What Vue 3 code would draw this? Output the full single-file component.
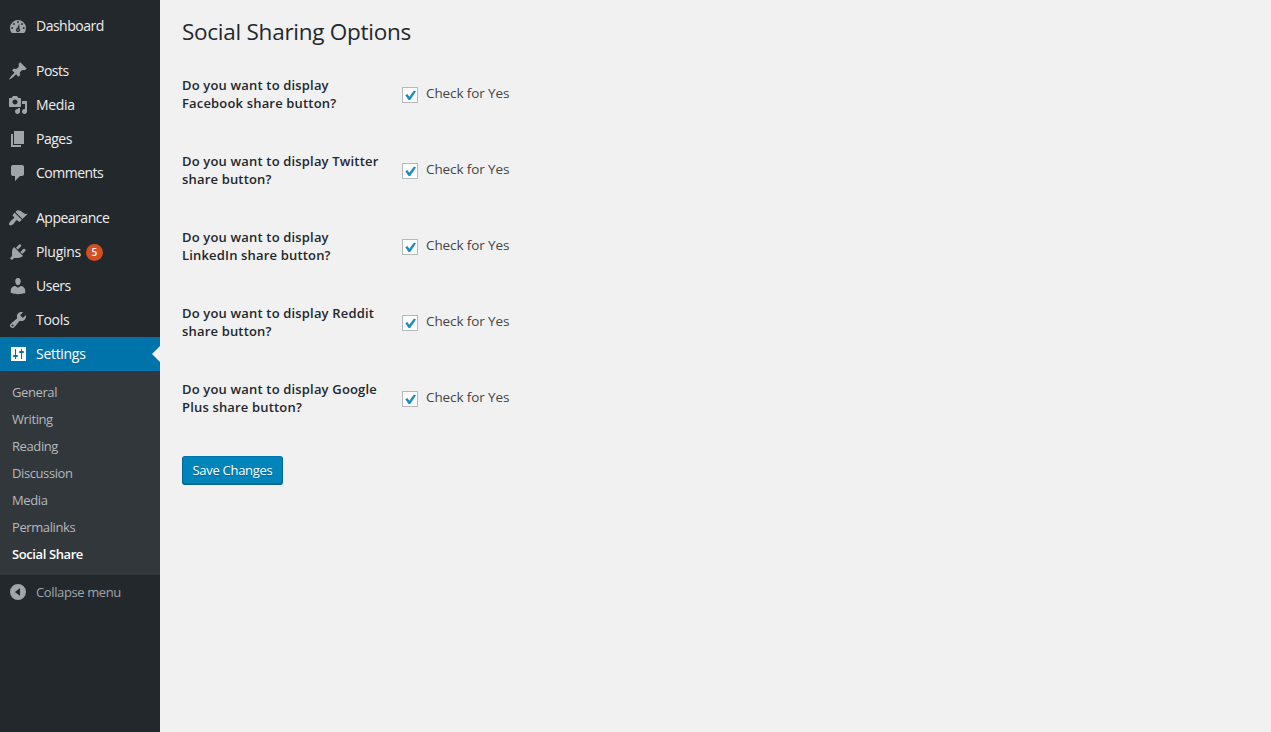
<script setup>
import { ref } from 'vue'

const icons = {
  dashboard: 'M3.76 17h12.48A8 8 0 1 0 3.76 17zM9.1 6a.9.9 0 1 0 1.8 0a.9.9 0 1 0-1.8 0zM5.1 8a.9.9 0 1 0 1.8 0a.9.9 0 1 0-1.8 0zM13.1 8a.9.9 0 1 0 1.8 0a.9.9 0 1 0-1.8 0zM3.3 12a.9.9 0 1 0 1.8 0a.9.9 0 1 0-1.8 0zM14.9 12a.9.9 0 1 0 1.8 0a.9.9 0 1 0-1.8 0zM11.3 7.5L11.4 12.5A2 2 0 1 1 9.3 12.1zM9.2 14a.8.8 0 1 0 1.6 0a.8.8 0 1 0-1.6 0z',
  posts: 'M10.44 3.02l1.82-1.82 6.36 6.35-1.83 1.82c-1.05-.68-2.48-.57-3.41.36l-.75.75c-.92.93-1.04 2.35-.35 3.41l-1.83 1.82-2.41-2.41-2.8 2.79c-.42.42-3.38 2.71-3.8 2.29s1.86-3.39 2.28-3.81l2.79-2.79L4.1 9.36l1.83-1.82c1.05.69 2.48.57 3.4-.36l.75-.75c.93-.92 1.05-2.35.36-3.41z',
  media: 'M13 11V4c0-.55-.45-1-1-1h-1.67L9 1H5L3.67 3H2c-.55 0-1 .45-1 1v7c0 .55.45 1 1 1h10c.55 0 1-.45 1-1zM7 4.5c1.38 0 2.5 1.12 2.5 2.5S8.38 9.5 7 9.5 4.5 8.38 4.5 7 5.62 4.5 7 4.5zM14 6h5v10.5c0 1.38-1.12 2.5-2.5 2.5S14 17.88 14 16.5s1.12-2.5 2.5-2.5c.17 0 .34.02.5.05V9h-3V6zm-4 8.05V13h2v3.5c0 1.38-1.12 2.5-2.5 2.5S7 17.88 7 16.5 8.12 14 9.5 14c.17 0 .34.02.5.05z',
  pages: 'M6 15V2h10v13H6zm-1 1h8v2H3V5h2v11z',
  comments: 'M5 2h9c1.1 0 2 .9 2 2v7c0 1.1-.9 2-2 2h-2l-5 5v-5H5c-1.1 0-2-.9-2-2V4c0-1.1.9-2 2-2z',
  appearance: 'M14.48 11.06L7.41 3.99l1.5-1.5c.5-.56 2.3-.47 3.51.32 1.21.8 1.43 1.28 2.91 2.1 1.18.64 2.45 1.26 4.45.85zm-.71.71L6.7 4.7 4.93 6.47c-.39.39-.39 1.02 0 1.41l1.06 1.06c.39.39.39 1.03 0 1.42-.6.6-1.43 1.11-2.21 1.69-.35.26-.7.53-1.01.84C1.43 14.23.4 16.08 1.4 17.07c.99 1 2.84-.03 4.18-1.36.31-.31.58-.66.85-1.02.57-.78 1.08-1.61 1.69-2.21.39-.39 1.02-.39 1.41 0l1.06 1.06c.39.39 1.02.39 1.41 0z',
  plugins: 'M13.11 4.36L9.87 7.6 8 5.73l3.24-3.24c.35-.34 1.05-.2 1.56.32.52.51.66 1.21.31 1.55zm-8 1.77l.91-1.12 9.01 9.01-1.19.84c-.71.71-2.63 1.16-3.82 1.16H6.14L4.9 17.26c-.59.59-1.54.59-2.12 0-.59-.58-.59-1.53 0-2.12l1.24-1.24v-3.88c0-1.13.4-3.19 1.09-3.89zm7.26 3.97l3.24-3.24c.34-.35 1.04-.21 1.55.31.52.51.66 1.21.31 1.55l-3.24 3.25z',
  users: 'M10 9.25c-2.27 0-2.73-3.44-2.73-3.44C7 4.02 7.82 2 9.97 2c2.16 0 2.98 2.02 2.71 3.81 0 0-.41 3.44-2.68 3.44zm0 2.57L12.72 10c2.39 0 4.52 2.33 4.52 4.53v2.49s-3.65 1.13-7.24 1.13c-3.65 0-7.24-1.13-7.24-1.13v-2.49c0-2.25 1.94-4.48 4.47-4.48z',
  tools: 'M16.68 9.77c-1.34 1.34-3.3 1.67-4.95.99l-5.41 6.52c-.99.99-2.59.99-3.58 0s-.99-2.59 0-3.57l6.52-5.42c-.68-1.65-.35-3.61.99-4.95 1.28-1.28 3.12-1.62 4.72-1.06l-2.89 2.89 2.82 2.82 2.86-2.87c.53 1.58.18 3.39-1.08 4.65zM3.81 16.21c.4.39 1.04.39 1.43 0 .4-.4.4-1.04 0-1.43-.39-.4-1.03-.4-1.43 0-.39.39-.39 1.03 0 1.43z',
  settings: 'M3 3H18V17H3zM7 5V11H6a1 1 0 0 0 0 2H7V15H8V13H9a1 1 0 0 0 0-2H8V5zM13 5V7H12a1 1 0 0 0 0 2H13V15H14V9H15a1 1 0 0 0 0-2H14V5z',
  collapse: 'M10 2a8 8 0 1 0 0 16a8 8 0 1 0 0-16zM12 6.3V13.7L6.8 10z'
}

const groups = [
  [{ id: 'dashboard', label: 'Dashboard' }],
  [
    { id: 'posts', label: 'Posts' },
    { id: 'media', label: 'Media' },
    { id: 'pages', label: 'Pages' },
    { id: 'comments', label: 'Comments' }
  ],
  [
    { id: 'appearance', label: 'Appearance' },
    { id: 'plugins', label: 'Plugins', count: 5 },
    { id: 'users', label: 'Users' },
    { id: 'tools', label: 'Tools' },
    { id: 'settings', label: 'Settings', current: true }
  ]
]

const submenu = ['General', 'Writing', 'Reading', 'Discussion', 'Media', 'Permalinks', 'Social Share']

const options = ref([
  { lines: ['Do you want to display', 'Facebook share button?'], on: true },
  { lines: ['Do you want to display Twitter', 'share button?'], on: true },
  { lines: ['Do you want to display', 'LinkedIn share button?'], on: true },
  { lines: ['Do you want to display Reddit', 'share button?'], on: true },
  { lines: ['Do you want to display Google', 'Plus share button?'], on: true }
])
</script>

<template>
  <div class="admin">
    <nav class="sidebar">
      <ul v-for="(group, g) in groups" :key="g" class="group">
        <li v-for="item in group" :key="item.id" class="item" :class="{ current: item.current }">
          <svg class="icon" viewBox="0 0 20 20"><path fill-rule="evenodd" :d="icons[item.id]" /></svg>
          <span :class="['label', item.id]">{{ item.label }}</span>
          <span v-if="item.count" class="count">{{ item.count }}</span>
        </li>
      </ul>
      <ul class="submenu">
        <li v-for="s in submenu" :key="s" :class="{ active: s === 'Social Share' }">{{ s }}</li>
      </ul>
      <div class="item collapse">
        <svg class="icon" viewBox="0 0 20 20"><path fill-rule="evenodd" :d="icons.collapse" /></svg>
        <span>Collapse menu</span>
      </div>
    </nav>
    <main class="content">
      <h1>Social Sharing Options</h1>
      <form @submit.prevent>
        <div v-for="(o, i) in options" :key="i" class="row">
          <div class="question">
            <div v-for="line in o.lines" :key="line">{{ line }}</div>
          </div>
          <label class="field">
            <input v-model="o.on" type="checkbox" class="native">
            <span class="box">
              <svg v-if="o.on" viewBox="0 0 14 14"><path d="M2.3 7.2L4.4 6.1L6.3 8.8L10.9 2.6L13 3.5L7.2 12.1H5.6Z" /></svg>
            </span>
            <span class="yes">Check for Yes</span>
          </label>
        </div>
        <button type="submit">Save Changes</button>
      </form>
    </main>
  </div>
</template>

<style>
body {
  margin: 0;
  background: #f1f1f1;
}
</style>

<style scoped>
.admin {
  display: flex;
  height: 732px;
  overflow: hidden;
  background: #f1f1f1;
  font-family: "Open Sans", "Noto Sans", sans-serif;
}
.sidebar {
  width: 160px;
  flex: none;
  box-sizing: border-box;
  padding-top: 9px;
  background: #23282d;
}
ul {
  margin: 0;
  padding: 0;
  list-style: none;
}
.group + .group {
  margin-top: 11px;
}
.item {
  position: relative;
  display: flex;
  align-items: center;
  height: 34px;
  padding-left: 8px;
  color: #eee;
  font-size: 14px;
  letter-spacing: -0.5px;
  white-space: nowrap;
}
.label {
  padding-bottom: 1px;
}
.plugins,
.settings,
.tools,
.media {
  letter-spacing: -0.3px;
}
.icon {
  width: 20px;
  height: 20px;
  margin-right: 8px;
  fill: #a0a5aa;
}
.count {
  width: 17px;
  height: 17px;
  margin-left: 5px;
  border-radius: 9px;
  background: #d54e21;
  color: #fff;
  font-size: 10px;
  font-weight: 600;
  line-height: 17px;
  text-align: center;
  letter-spacing: 0;
}
.current {
  background: #0073aa;
  color: #fff;
}
.current .icon {
  fill: #fff;
}
.current::after {
  content: "";
  position: absolute;
  right: 0;
  top: 9px;
  border: 8px solid transparent;
  border-left: 0;
  border-right-color: #f1f1f1;
}
.submenu {
  padding: 8px 0 7px;
  background: #32373c;
}
.submenu li {
  height: 27px;
  padding-left: 12px;
  color: #b4b9be;
  font-size: 13px;
  line-height: 27px;
  letter-spacing: -0.4px;
}
.submenu .active {
  color: #fff;
  font-weight: 600;
}
.collapse {
  color: #a0a5aa;
  font-size: 13px;
  letter-spacing: -0.38px;
}
.content {
  padding: 16px 0 0 22px;
}
h1 {
  margin: 0 0 29px;
  color: #23282d;
  font-size: 22.5px;
  font-weight: 400;
  line-height: 31px;
  letter-spacing: -0.26px;
}
.row {
  display: flex;
  height: 76px;
}
.question {
  width: 220px;
  color: #23282d;
  font-size: 13px;
  font-weight: 600;
  line-height: 18px;
  letter-spacing: 0.17px;
  white-space: nowrap;
}
.field {
  display: flex;
  height: 16px;
  margin-top: 11px;
}
.native {
  position: absolute;
  opacity: 0;
}
.box {
  width: 14px;
  height: 14px;
  border: 1px solid #b4b9be;
  background: #fff;
}
.box svg {
  display: block;
  fill: #1e8cbe;
}
.yes {
  margin: -3px 0 0 8px;
  color: #444;
  font-size: 13.5px;
  line-height: 19px;
  letter-spacing: -0.1px;
  white-space: nowrap;
}
button {
  display: block;
  width: 101px;
  height: 29px;
  padding: 0 0 2px;
  border: 1px solid #006799;
  border-top-color: #0073aa;
  border-radius: 3px;
  box-shadow: inset 0 -1px 0 #006799;
  background: #0085ba;
  color: #fff;
  font-family: inherit;
  font-size: 13px;
  line-height: 24px;
  letter-spacing: -0.28px;
  text-shadow: 0 1px 1px #006799;
  white-space: nowrap;
}
</style>
